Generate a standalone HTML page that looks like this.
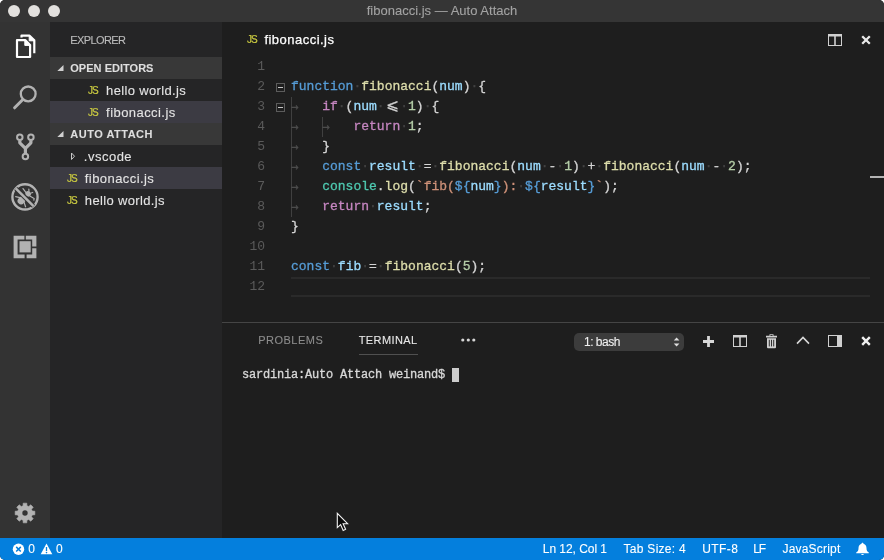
<!DOCTYPE html>
<html><head><meta charset="utf-8"><title>fibonacci.js — Auto Attach</title>
<style>
*{box-sizing:border-box;margin:0;padding:0}
html,body{width:884px;height:560px;overflow:hidden;background:#fff}
body{font-family:"Liberation Sans",sans-serif;position:relative;-webkit-font-smoothing:antialiased}
#win{will-change:transform;position:absolute;left:0;top:0;width:884px;height:560px;border-radius:5px;overflow:hidden;background:#1e1e1e}
.abs{position:absolute}
.t{position:absolute;white-space:pre;line-height:1;-webkit-text-stroke:0.1px}
#titlebar{left:0;top:0;width:884px;height:22px;background:#353535}
.tl{position:absolute;top:4.8px;width:12px;height:12px;border-radius:50%;background:#e2e0dd}
#activity{left:0;top:22px;width:50px;height:516px;background:#333333}
#sidebar{left:50px;top:22px;width:172px;height:516px;background:#252526}
.hdr{position:absolute;left:0;width:172px;height:22px;background:#383838}
.sel{position:absolute;left:0;width:172px;height:22px;background:#3c3b43}
.js{position:absolute;font-size:10px;color:#cbcb41;line-height:1;letter-spacing:-1.1px;-webkit-text-stroke:0.2px #cbcb41}
#status{left:0;top:537.5px;width:884px;height:22.5px;background:#047fdd}
#status .t{color:#fff;font-size:12px}
.code{-webkit-text-stroke:0.3px;font-family:"Liberation Mono",monospace;font-size:13px;line-height:20px;white-space:pre;position:absolute;left:291px;height:20px;color:#d4d4d4}
.ln{font-family:"Liberation Mono",monospace;font-size:13px;line-height:20px;position:absolute;left:222px;width:43px;text-align:right;color:#5a5a5a;height:20px}
.k{color:#569cd6}.f{color:#dcdcaa}.v{color:#9cdcfe}.c{color:#c586c0}.n{color:#b5cea8}.s{color:#ce9178}.g{color:#4ec9b0}
.w{color:#424242}.tab{color:#4c4c4c;display:inline-block;width:31.2px;height:20px;line-height:20px;vertical-align:top;overflow:hidden;font-family:"DejaVu Sans Mono",monospace;font-size:13px}
.lig{display:inline-block;width:15.6px;height:20px;line-height:17px;vertical-align:top;overflow:hidden;text-align:center;font-family:"DejaVu Sans",sans-serif;font-size:15px}
.guide{position:absolute;width:1px;background:#404040}
.fold{position:absolute;left:276px;width:9px;height:9px;border:1px solid #5c5c5c}
.fold:after{content:"";position:absolute;left:1px;top:3px;width:5px;height:1px;background:#c5c5c5}
</style></head><body>
<div id="win">
<!-- TITLEBAR -->
<div id="titlebar" class="abs">
<div class="tl" style="left:8px"></div><div class="tl" style="left:28px"></div><div class="tl" style="left:48px"></div>
<div class="t" id="title" style="left:366.7px;letter-spacing:0.01px;top:4px;font-size:13px;color:#a3a3a3">fibonacci.js — Auto Attach</div>
</div>
<!-- ACTIVITY -->
<div id="activity" class="abs">
<svg class="abs" style="left:0;top:0" width="50" height="516" viewBox="0 0 50 516">
<!-- files: y offset -22 -->
<g fill="none" stroke="#ffffff" stroke-width="2.2" stroke-linejoin="round">
<path d="M21.5 15.4 V13.7 H29.6 L34.3 18.4 V31.2" />
<path d="M29.2 13.8 V18.8 H34.2 Z" fill="#ffffff" stroke-width="1"/>
<path d="M17 18.1 H25.2 L30.1 23 V35 H17 Z" fill="#333333"/>
<path d="M24.8 18.3 V23.4 H29.9 Z" fill="#ffffff" stroke-width="1"/>
</g>
<!-- search -->
<g fill="none" stroke="#b2b2b2">
<circle cx="28.2" cy="71.9" r="7.4" stroke-width="2.3"/>
<path d="M22.6 77.8 L14.6 85.8" stroke-width="3" stroke-linecap="round"/>
</g>
<!-- git -->
<g fill="none" stroke="#b2b2b2" stroke-width="1.9">
<circle cx="19.8" cy="115.3" r="2.75" stroke-width="2"/>
<circle cx="30.9" cy="115.3" r="2.75" stroke-width="2"/>
<circle cx="25.4" cy="134.4" r="2.75" stroke-width="2"/>
<path d="M19.8 118.4 V120.8 L25.4 126.3 V131.2 M30.9 118.4 V120.8 L25.4 126.3" stroke-width="3.2" stroke-linejoin="round"/>
</g>
<!-- debug -->
<circle cx="25" cy="174.9" r="12.6" fill="none" stroke="#b2b2b2" stroke-width="2.4"/>
<g transform="translate(25 174.9) rotate(45)" fill="#b2b2b2" stroke="#b2b2b2" stroke-width="1.2" stroke-linecap="round">
<ellipse cx="0" cy="5" rx="3.6" ry="4.1" stroke="none"/>
<ellipse cx="0" cy="-4.4" rx="2.9" ry="2.5" stroke="none"/>
<path d="M-3 4 L-6.8 6.4 M3 4.4 L7.4 6.6 M-2.6 -3.8 L-7.3 -4.5 M2.8 -4 L7.6 -5.3 L8.5 -4 M-0.8 -6.4 L-2.8 -8.2 M1.2 -6.4 L2.3 -8.6" fill="none"/>
</g>
<path d="M15.7 166.4 L33.5 184.2" stroke="#333333" stroke-width="4.3" fill="none"/>
<path d="M15.7 166.4 L33.5 184.2" stroke="#b2b2b2" stroke-width="2.5" fill="none"/>
<!-- extensions -->
<g fill="#b2b2b2">
<path d="M13.6 213.8 H24.4 V217.6 H17.6 V232.4 H24.6 V236.3 H13.6 Z"/>
<path d="M25.8 213.8 H36.4 V224.6 H32.2 V217.6 H25.8 Z"/>
<path d="M32.2 226.2 H36.4 V236.3 H26.6 V232.4 H32.2 Z"/>
<rect x="19.5" y="219.2" width="11.2" height="11.2"/>
</g>
<!-- gear -->
<path d="M23.08 483.75 L23.20 481.16 L26.80 481.16 L26.92 483.75 L28.77 484.51 L30.69 482.77 L33.23 485.31 L31.49 487.23 L32.25 489.08 L34.84 489.20 L34.84 492.80 L32.25 492.92 L31.49 494.77 L33.23 496.69 L30.69 499.23 L28.77 497.49 L26.92 498.25 L26.80 500.84 L23.20 500.84 L23.08 498.25 L21.23 497.49 L19.31 499.23 L16.77 496.69 L18.51 494.77 L17.75 492.92 L15.16 492.80 L15.16 489.20 L17.75 489.08 L18.51 487.23 L16.77 485.31 L19.31 482.77 L21.23 484.51Z" fill="#b2b2b2" stroke="#b2b2b2" stroke-width="0.6" stroke-linejoin="round"/>
<circle cx="25" cy="491" r="2.7" fill="#333333"/>
</svg>
</div>
<!-- SIDEBAR -->
<div id="sidebar" class="abs">
<div class="t" id="explorer" style="left:20.3px;letter-spacing:-0.61px;top:13px;font-size:11px;color:#bbbbbb">EXPLORER</div>
<div class="hdr" style="top:35px"></div>
<svg class="abs" style="left:7px;top:43px" width="7" height="6"><polygon points="6.5,0 6.5,6 0.3,6" fill="#d0d0d0"/></svg>
<div class="t" id="openeditors" style="left:20.3px;letter-spacing:0.02px;top:41px;font-size:11px;font-weight:bold;color:#dedede">OPEN EDITORS</div>
<div class="js" style="left:38px;top:64px">JS</div>
<div class="t" id="oe1" style="left:56.1px;letter-spacing:0.35px;top:61.6px;font-size:13px;color:#e4e4e4">hello world.js</div>
<div class="sel" style="top:79px"></div>
<div class="js" style="left:38px;top:86px">JS</div>
<div class="t" id="oe2" style="left:56.1px;letter-spacing:0.44px;top:83.6px;font-size:13px;color:#e4e4e4">fibonacci.js</div>
<div class="hdr" style="top:101px"></div>
<svg class="abs" style="left:7px;top:109px" width="7" height="6"><polygon points="6.5,0 6.5,6 0.3,6" fill="#d0d0d0"/></svg>
<div class="t" id="autoattach" style="left:20.3px;letter-spacing:0.50px;top:107px;font-size:11px;font-weight:bold;color:#dedede">AUTO ATTACH</div>
<svg class="abs" style="left:20px;top:130px" width="6" height="9"><polygon points="1.5,1 4.5,4.2 1.5,7.5" fill="none" stroke="#c8c8c8" stroke-width="1"/></svg>
<div class="t" id="vscode" style="left:33.8px;letter-spacing:0.50px;top:127.6px;font-size:13px;color:#e4e4e4">.vscode</div>
<div class="sel" style="top:145px"></div>
<div class="js" style="left:17px;top:152px">JS</div>
<div class="t" id="f1" style="left:34.8px;letter-spacing:0.43px;top:149.6px;font-size:13px;color:#e4e4e4">fibonacci.js</div>
<div class="js" style="left:17px;top:174px">JS</div>
<div class="t" id="f2" style="left:34.8px;letter-spacing:0.35px;top:171.6px;font-size:13px;color:#e4e4e4">hello world.js</div>
</div>
<!-- EDITOR -->
<div id="editor" class="abs" style="left:0;top:0">
<div class="js" style="left:247px;top:35px">JS</div>
<div class="t" id="tabname" style="-webkit-text-stroke:0.25px;left:264.4px;letter-spacing:0.48px;top:33px;font-size:13px;color:#ffffff">fibonacci.js</div>
<svg class="abs" style="left:828px;top:34px" width="14" height="12"><rect x="0.5" y="0.5" width="13" height="11" fill="none" stroke="#d0d0d0"/><rect x="0" y="0" width="14" height="2.5" fill="#d0d0d0"/><rect x="6.2" y="2" width="1.6" height="10" fill="#d0d0d0"/></svg>
<svg class="abs" style="left:861px;top:35px" width="10" height="10"><path d="M1.2 1.2 L8.8 8.8 M8.8 1.2 L1.2 8.8" stroke="#e8e8e8" stroke-width="2.3"/></svg>
<div class="abs" style="left:291px;top:277px;width:579px;height:20px;border-top:2px solid #2a2a2a;border-bottom:2px solid #2a2a2a"></div>
<div class="guide" style="left:291px;top:97px;height:120px"></div>
<div class="guide" style="left:322px;top:117px;height:20px"></div>
<div class="ln" style="top:57px">1</div>
<div class="ln" style="top:77px">2</div>
<div class="code" style="top:77px"><span class="k">function</span><span class="w">·</span><span class="f">fibonacci</span>(<span class="v">num</span>)<span class="w">·</span>{</div>
<div class="ln" style="top:97px">3</div>
<div class="code" style="top:97px"><span class="tab">→</span><span class="c">if</span><span class="w">·</span>(<span class="v">num</span><span class="w">·</span><span class="lig">⩽</span><span class="w">·</span><span class="n">1</span>)<span class="w">·</span>{</div>
<div class="ln" style="top:117px">4</div>
<div class="code" style="top:117px"><span class="tab">→</span><span class="tab">→</span><span class="c">return</span><span class="w">·</span><span class="n">1</span>;</div>
<div class="ln" style="top:137px">5</div>
<div class="code" style="top:137px"><span class="tab">→</span>}</div>
<div class="ln" style="top:157px">6</div>
<div class="code" style="top:157px"><span class="tab">→</span><span class="k">const</span><span class="w">·</span><span class="v">result</span><span class="w">·</span>=<span class="w">·</span><span class="f">fibonacci</span>(<span class="v">num</span><span class="w">·</span>-<span class="w">·</span><span class="n">1</span>)<span class="w">·</span>+<span class="w">·</span><span class="f">fibonacci</span>(<span class="v">num</span><span class="w">·</span>-<span class="w">·</span><span class="n">2</span>);</div>
<div class="ln" style="top:177px">7</div>
<div class="code" style="top:177px"><span class="tab">→</span><span class="g">console</span>.<span class="f">log</span>(<span class="s">`fib(</span><span class="k">${</span><span class="v">num</span><span class="k">}</span><span class="s">):</span><span class="w">·</span><span class="k">${</span><span class="v">result</span><span class="k">}</span><span class="s">`</span>);</div>
<div class="ln" style="top:197px">8</div>
<div class="code" style="top:197px"><span class="tab">→</span><span class="c">return</span><span class="w">·</span><span class="v">result</span>;</div>
<div class="ln" style="top:217px">9</div>
<div class="code" style="top:217px">}</div>
<div class="ln" style="top:237px">10</div>
<div class="ln" style="top:257px">11</div>
<div class="code" style="top:257px"><span class="k">const</span><span class="w">·</span><span class="v">fib</span><span class="w">·</span>=<span class="w">·</span><span class="f">fibonacci</span>(<span class="n">5</span>);</div>
<div class="ln" style="top:277px">12</div>
<div class="fold" style="top:83px"></div><div class="fold" style="top:103px"></div>
<div class="abs" style="left:870px;top:176px;width:14px;height:2px;background:#b4b4b4"></div>
</div>
<!-- PANEL -->
<div id="panel" class="abs" style="left:0;top:0">
<div class="abs" style="left:222px;top:322px;width:662px;height:1px;background:#454545"></div>
<div class="t" id="problems" style="left:258.2px;letter-spacing:0.49px;top:335px;font-size:11px;color:#8c8c8c">PROBLEMS</div>
<div class="t" id="terminal" style="left:358.7px;letter-spacing:0.41px;top:335px;font-size:11px;color:#e7e7e7">TERMINAL</div>
<div class="abs" style="left:359px;top:354px;width:59px;height:1px;background:#505050"></div>
<svg class="abs" style="left:461px;top:338px" width="15" height="4"><circle cx="1.8" cy="2" r="1.6" fill="#d6d6d6"/><circle cx="7.3" cy="2" r="1.6" fill="#d6d6d6"/><circle cx="12.8" cy="2" r="1.6" fill="#d6d6d6"/></svg>
<div class="abs" style="left:574px;top:333px;width:110px;height:18px;border-radius:5px;background:#3c3c3c"></div>
<div class="t" id="bash" style="left:584.0px;letter-spacing:-0.50px;top:336px;font-size:12px;color:#f0f0f0">1: bash</div>
<svg class="abs" style="left:673px;top:337px" width="8" height="10"><polygon points="3.6,0.5 6.4,3.6 0.8,3.6" fill="#e0e0e0"/><polygon points="3.6,9.5 6.4,6.4 0.8,6.4" fill="#e0e0e0"/></svg>
<svg class="abs" style="left:702px;top:335px" width="13" height="13"><path d="M6.5 1 V12 M1 6.5 H12" stroke="#d8d8d8" stroke-width="2.8"/></svg>
<svg class="abs" style="left:733px;top:335px" width="14" height="12"><rect x="0.5" y="0.5" width="13" height="11" fill="none" stroke="#d0d0d0"/><rect x="0" y="0" width="14" height="2.5" fill="#d0d0d0"/><rect x="6.2" y="2" width="1.6" height="10" fill="#d0d0d0"/></svg>
<svg class="abs" style="left:765px;top:333px" width="13" height="16"><path d="M4.5 1.2 h4 v1.6 h3.5 v1.7 h-11 v-1.7 h3.5z" fill="#d0d0d0"/><path d="M2 5.3 h9 v9 q0 1 -1 1 h-7 q-1 0 -1 -1z" fill="#d0d0d0"/><path d="M4.3 6.8 v6.6 M6.5 6.8 v6.6 M8.7 6.8 v6.6" stroke="#1e1e1e" stroke-width="0.9"/><rect x="5.4" y="2.1" width="2.2" height="0.9" fill="#1e1e1e"/></svg>
<svg class="abs" style="left:796px;top:336px" width="14" height="9"><path d="M1 7.6 L7 1.5 L13 7.6" fill="none" stroke="#d8d8d8" stroke-width="1.6"/></svg>
<svg class="abs" style="left:828px;top:335px" width="14" height="12"><rect x="0.5" y="0.5" width="13" height="11" fill="none" stroke="#d0d0d0"/><rect x="9" y="0" width="5" height="12" fill="#d0d0d0"/></svg>
<svg class="abs" style="left:861px;top:336px" width="10" height="10"><path d="M1.2 1.2 L8.8 8.8 M8.8 1.2 L1.2 8.8" stroke="#f0f0f0" stroke-width="2.4"/></svg>
<div class="t" id="term" style="left:242px;top:368px;-webkit-text-stroke:0.3px;font-family:'Liberation Mono',monospace;font-size:12px;letter-spacing:-0.2px;color:#d8d8d8;line-height:14px">sardinia:Auto Attach weinand$</div>
<div class="abs" style="left:452px;top:368px;width:7px;height:14px;background:#cccccc"></div>
<svg class="abs" style="left:336.4px;top:511.6px" width="14" height="20" viewBox="0 0 14 20"><path d="M1.3 1.3 V15.6 L4.6 12.6 L7.2 18.4 L9.6 17.3 L7.1 11.7 H11.6 Z" fill="#0a0a0a" stroke="#f4f4f4" stroke-width="1.1" stroke-linejoin="miter"/></svg>
</div>
<!-- STATUS -->
<div id="status" class="abs">
<svg class="abs" style="left:12px;top:5px" width="13" height="13"><circle cx="6.5" cy="6.2" r="5.7" fill="#fff"/><path d="M4.2 3.9 L8.8 8.5 M8.8 3.9 L4.2 8.5" stroke="#047fdd" stroke-width="1.5"/></svg>
<div class="t" id="s0a" style="left:28.3px;letter-spacing:0.00px;top:5px">0</div>
<svg class="abs" style="left:40px;top:5px" width="13" height="12"><path d="M6.5 0.6 L12.3 11.3 H0.7 Z" fill="#fff"/><path d="M6.5 4 V8" stroke="#047fdd" stroke-width="1.3"/><circle cx="6.5" cy="9.6" r="0.8" fill="#047fdd"/></svg>
<div class="t" id="s0b" style="left:56px;top:5px">0</div>
<div class="t" id="s1" style="left:542.8px;letter-spacing:-0.05px;top:5px">Ln 12, Col 1</div>
<div class="t" id="s2" style="left:623.6px;letter-spacing:0.27px;top:5px">Tab Size: 4</div>
<div class="t" id="s3" style="left:702.2px;letter-spacing:0.45px;top:5px">UTF-8</div>
<div class="t" id="s4" style="left:753.2px;letter-spacing:-1.20px;top:5px">LF</div>
<div class="t" id="s5" style="left:782.5px;letter-spacing:0.19px;top:5px">JavaScript</div>
<svg class="abs" style="left:855px;top:4px" width="15" height="14"><path d="M7.5 0.8 c0.7 0 1 0.5 1 1 c2.2 0.6 3 2.4 3 4.4 c0 2.4 0.8 3.2 2.3 4.3 v0.8 h-12.6 v-0.8 c1.5 -1.1 2.3 -1.9 2.3 -4.3 c0 -2 0.8 -3.8 3 -4.4 c0 -0.5 0.3 -1 1 -1z" fill="#fff"/><path d="M6 12 a1.6 1.6 0 0 0 3 0z" fill="#fff"/></svg>
</div>
</div>
</body></html>
